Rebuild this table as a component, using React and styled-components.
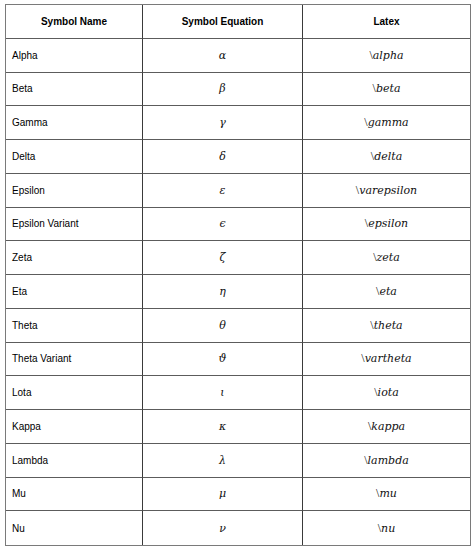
import React from "react";
import styled, { createGlobalStyle } from "styled-components";

const Global = createGlobalStyle`
  html, body { margin: 0; padding: 0; background: #fff; }
  body { font-family: "Liberation Sans", Arial, sans-serif; }
`;

const symbols = [
  ["Alpha", "α", "alpha"],
  ["Beta", "β", "beta"],
  ["Gamma", "γ", "gamma"],
  ["Delta", "δ", "delta"],
  ["Epsilon", "ε", "varepsilon"],
  ["Epsilon Variant", "ϵ", "epsilon"],
  ["Zeta", "ζ", "zeta"],
  ["Eta", "η", "eta"],
  ["Theta", "θ", "theta"],
  ["Theta Variant", "ϑ", "vartheta"],
  ["Lota", "ι", "iota"],
  ["Kappa", "κ", "kappa"],
  ["Lambda", "λ", "lambda"],
  ["Mu", "μ", "mu"],
  ["Nu", "ν", "nu"],
];

const Page = styled.div`
  padding: 4px 0 0 5px;
`;

const Table = styled.div`
  width: 466px;
  height: 542px;
  box-sizing: border-box;
  border: 1.5px solid #7a7a7a;
  display: grid;
  grid-template-columns: 137px 160px 1fr;
  grid-template-rows: repeat(16, 1fr);
`;

const Cell = styled.div`
  display: flex;
  align-items: center;
  justify-content: ${(p) => (p.$center ? "center" : "flex-start")};
  padding-left: ${(p) => (p.$center ? "0" : "6px")};
  border-bottom: ${(p) => (p.$last ? "none" : "1px solid #5c5c5c")};
  border-right: ${(p) => (p.$end ? "none" : "1px solid #3a3a3a")};
  font-size: 10px;
  color: #000;
`;

const HeadCell = styled(Cell)`
  font-weight: bold;
  justify-content: center;
  padding-left: 0;
`;

const MathText = styled.span`
  font-family: "DejaVu Serif", "Liberation Serif", serif;
  font-style: italic;
  font-size: 11px;
  color: #111;
`;

const Slash = styled.span`
  font-style: normal;
  font-family: "Liberation Serif", serif;
  font-size: 12px;
`;

export default function App() {
  return (
    <Page>
      <Global />
      <Table>
        <HeadCell>Symbol Name</HeadCell>
        <HeadCell>Symbol Equation</HeadCell>
        <HeadCell $end>Latex</HeadCell>
        {symbols.map(([name, sym, tex], i) => {
          const last = i === symbols.length - 1;
          return (
            <React.Fragment key={name}>
              <Cell $last={last}>{name}</Cell>
              <Cell $last={last} $center>
                <MathText>{sym}</MathText>
              </Cell>
              <Cell $last={last} $center $end>
                <MathText>
                  <Slash>\</Slash>
                  {tex}
                </MathText>
              </Cell>
            </React.Fragment>
          );
        })}
      </Table>
    </Page>
  );
}
